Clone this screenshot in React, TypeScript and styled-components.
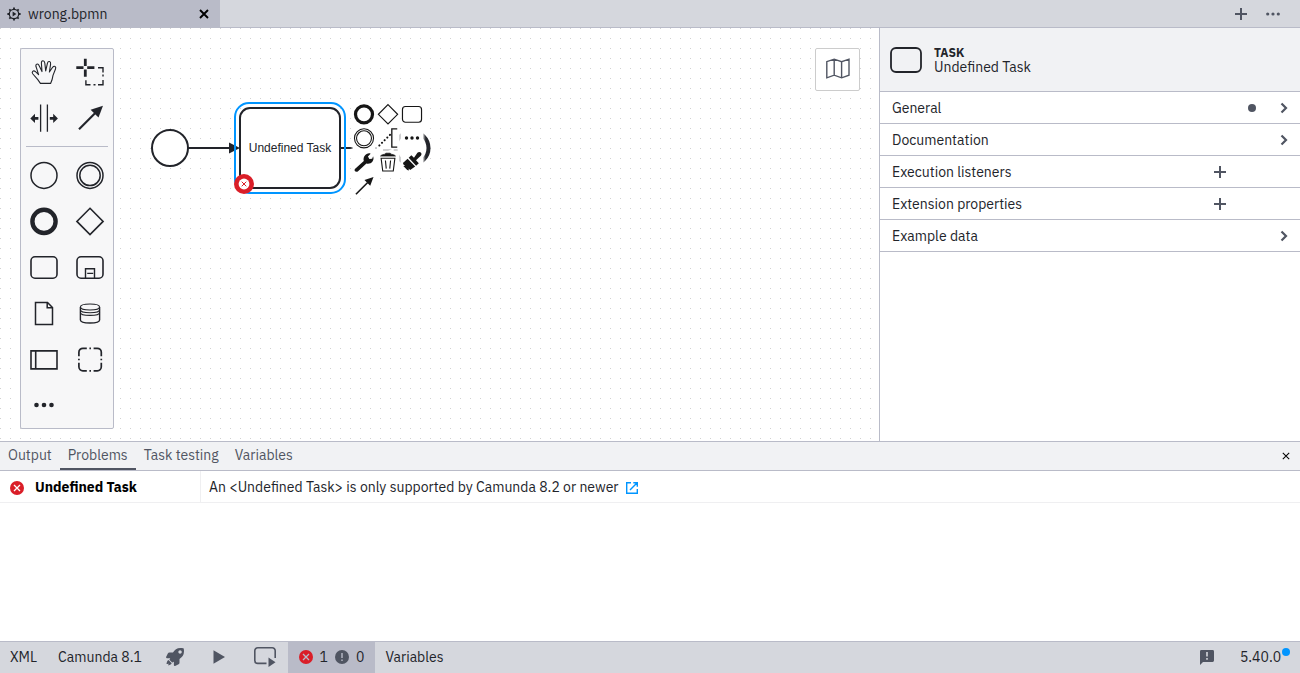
import React from "react";
import styled, { createGlobalStyle, css } from "styled-components";

const color = {
  text: "#22242a",
  icon: "#505562",
  line: "#b9bbc8",
  bar: "#d5d7dd",
  active: "#b9bbc8",
  header: "#f1f2f4",
  palette: "#f7f7f8",
  blue: "#0095ff",
  red: "#da1e28",
};

const GlobalStyle = createGlobalStyle`
  *, *::before, *::after { box-sizing: border-box; }
  body {
    margin: 0;
    font-family: "IBM Plex Sans", Roboto, "Liberation Sans", sans-serif;
    font-size: 14px;
    line-height: 18px;
    color: ${color.text};
    background: #fff;
  }
  button {
    font: inherit;
    color: inherit;
    background: none;
    border: 0;
    padding: 0;
    cursor: pointer;
  }
  svg { display: block; flex: none; }
`;

const Page = styled.div`
  display: flex;
  flex-direction: column;
  min-height: 100vh;
`;

/* ---------- tab bar ---------- */

const TabBar = styled.header`
  display: flex;
  height: 28px;
  background: ${color.bar};
  border-bottom: 1px solid ${color.line};
`;

const FileTab = styled.div`
  display: flex;
  align-items: center;
  gap: 7px;
  width: 220px;
  padding: 0 9px 0 7px;
  background: ${color.active};
`;

const FileName = styled.span`
  flex: 1;
`;

const TabActions = styled.div`
  display: flex;
  margin-left: auto;
  padding-right: 11px;
`;

const IconButton = styled.button<{ $width?: number }>`
  display: flex;
  align-items: center;
  justify-content: center;
  width: ${(p) => p.$width ?? 32}px;
  color: ${color.icon};
`;

/* ---------- editor ---------- */

const Editor = styled.main`
  display: flex;
  flex: 1;
`;

const Canvas = styled.section`
  position: relative;
  flex: 1;
  padding: 20px;
  padding-bottom: 12px;
  display: flex;
  align-items: flex-start;
  justify-content: space-between;
`;

const Diagram = styled.svg`
  position: absolute;
  inset: 0;
  width: 100%;
  height: 100%;
  font-family: "Liberation Sans", Arial, sans-serif;
  font-size: 12px;
`;

const Palette = styled.nav`
  position: relative;
  display: grid;
  grid-template-columns: 46px 46px;
  grid-auto-rows: auto;
  background: ${color.palette};
  border: 1px solid ${color.line};
  border-radius: 2px;
`;

const PaletteEntry = styled.button`
  display: flex;
  align-items: center;
  justify-content: center;
  height: 46px;
  color: ${color.text};
`;

const Separator = styled.hr`
  grid-column: 1 / -1;
  width: 82px;
  margin: 5px;
  border: 0;
  border-top: 1px solid ${color.line};
`;

const MapToggle = styled.button`
  position: relative;
  display: flex;
  align-items: center;
  justify-content: center;
  width: 45px;
  height: 43px;
  margin-right: -1px;
  padding-bottom: 2px;
  color: ${color.icon};
  background: #fff;
  border: 1px solid #ccc;
  border-radius: 2px;
`;

const ContextPad = styled.div`
  position: absolute;
  left: 353px;
  top: 75px;
  display: grid;
  grid-template-columns: repeat(3, 22px);
  gap: 2px;
`;

const PadEntry = styled.button`
  width: 22px;
  height: 22px;
  color: #161616;
  background: #fff;
  box-shadow: 0 0 2px 1px #fff;
`;

const ErrorBadge = styled.button`
  position: absolute;
  left: 234px;
  top: 146px;
`;

/* ---------- properties ---------- */

const Properties = styled.aside`
  width: 421px;
  border-left: 1px solid ${color.line};
  background: #fff;
`;

const PropertiesHeader = styled.div`
  display: flex;
  align-items: center;
  gap: 12px;
  height: 64px;
  padding: 0 10px;
  background: ${color.header};
  border-bottom: 1px solid ${color.line};
`;

const ElementType = styled.div`
  font-size: 12px;
  line-height: 15px;
  font-weight: 700;
`;

const ElementName = styled.div`
  line-height: 15px;
`;

const Group = styled.div`
  display: flex;
  height: 32px;
  border-bottom: 1px solid ${color.line};
`;

const GroupTitle = styled.button`
  flex: 1;
  padding-left: 12px;
  text-align: left;
`;

const Slot = styled.span`
  display: flex;
  align-items: center;
  justify-content: center;
  width: 32px;
  color: ${color.icon};
`;

const Dot = styled.span`
  width: 8px;
  height: 8px;
  border-radius: 50%;
  background: ${color.icon};
`;

/* ---------- bottom panel ---------- */

const Panel = styled.section`
  height: 200px;
  border-top: 1px solid ${color.line};
`;

const PanelTabs = styled.div`
  display: flex;
  height: 29px;
  padding-right: 6px;
  background: ${color.header};
  border-bottom: 1px solid ${color.line};
`;

const PanelTab = styled.button<{ $active?: boolean }>`
  padding: 0 8px;
  color: ${color.icon};
  border-bottom: 2px solid ${(p) => (p.$active ? color.icon : "transparent")};
`;

const PanelClose = styled.button`
  display: flex;
  align-items: center;
  justify-content: center;
  width: 16px;
  margin-left: auto;
`;

const Problem = styled.div`
  display: grid;
  grid-template-columns: 201px 1fr;
  height: 32px;
  border-bottom: 1px solid #efeff1;
`;

const ProblemName = styled.div`
  display: flex;
  align-items: center;
  gap: 11px;
  padding-left: 10px;
  font-weight: 700;
  color: #000;
  border-right: 1px solid #efeff1;
`;

const ProblemText = styled.div`
  display: flex;
  align-items: center;
  gap: 8px;
  padding-left: 8px;
`;

const HelpLink = styled.a`
  padding-top: 2px;
  color: ${color.blue};
`;

const ProblemIcon = styled.span`
  padding-top: 2px;
`;

/* ---------- status bar ---------- */

const StatusBar = styled.footer`
  display: flex;
  height: 32px;
  background: ${color.bar};
  border-top: 1px solid ${color.line};
`;

const StatusButton = styled.button<{ $width: number; $active?: boolean; $muted?: boolean }>`
  display: flex;
  align-items: center;
  justify-content: center;
  gap: 7px;
  min-width: ${(p) => p.$width}px;
  padding-bottom: 2px;
  ${(p) => p.$active && css`background: ${color.active};`}
  ${(p) => p.$muted && css`color: ${color.icon};`}
`;

const StatusEnd = styled.div`
  display: flex;
  margin-left: auto;
  padding-right: 9px;
`;

const Version = styled(StatusButton)`
  position: relative;
`;

const UpdateDot = styled.span`
  position: absolute;
  right: 1px;
  top: 6px;
  width: 8px;
  height: 8px;
  border-radius: 50%;
  background: ${color.blue};
`;

/* ---------- glyphs, all drawn in a 30 x 30 box ---------- */

const glyphs: Record<string, React.ReactNode> = {
  hand: (
    <path
      d="M11.4 26.4 8.6 22.4 3.9 17C2.1 14.8 4.4 12.8 6.5 14.7L9.6 17.6 7.2 10.2C6 7 8.9 5.7 10.2 8.7L13 14.6 12.4 6.2C12.2 3 15.4 2.9 15.8 6L16.7 13.9 18.4 6.3C19.1 3.5 22 4.1 21.6 7.1L20.4 15 23.6 10.3C25.2 8.2 27.5 9.5 26.5 12L24 18.4C23.6 21.5 23 23.5 21.6 26.4Z"
      strokeWidth="1.1"
      strokeLinejoin="round"
    />
  ),
  lasso: (
    <>
      <path d="M1.3 10.7h7.2M12.2 10.7h7.2M10.3 1.7v7.2M10.3 12.6v7.2" strokeWidth="2.8" />
      <path d="M23 10.8h5v4.600M28 17.500v2M28 23v4.800H23M20.500 27.800h-2M15.500 27.800h-4.600v-4.500" strokeWidth="1.4" />
    </>
  ),
  space: (
    <>
      <path d="M11.6 1.6v27.2M18.4 1.6v27.2" strokeWidth="1.3" />
      <path d="M1.3 15.4 6 10.8v3.2h3.4v2.8H6V20ZM28.9 15.4l-4.7-4.6v3.2h-3.4v2.8h3.4V20Z" fill="currentColor" stroke="none" />
    </>
  ),
  arrow: (
    <>
      <path d="M4 26.2 20 10.2" strokeWidth="2.2" />
      <path d="M28 2.8 23.5 14.6 15.6 6.8Z" fill="currentColor" stroke="none" />
    </>
  ),
  start: <circle cx="15" cy="15.4" r="13" strokeWidth="1.5" />,
  intermediate: (
    <>
      <circle cx="15" cy="15.4" r="13" strokeWidth="1.5" />
      <circle cx="15" cy="15.4" r="10.2" strokeWidth="1.5" />
    </>
  ),
  end: <circle cx="15" cy="15.4" r="11.6" strokeWidth="4.4" />,
  gateway: <path d="M15 2.3 28.1 15.4 15 28.5 1.9 15.4Z" strokeWidth="1.6" />,
  task: <rect x="2" y="4.8" width="26" height="21.4" rx="4" strokeWidth="1.6" />,
  subprocess: (
    <>
      <rect x="2" y="4.8" width="26" height="21.4" rx="4" strokeWidth="1.6" />
      <path d="M10.5 26v-9.2h9V26M12.2 21.4h6" strokeWidth="1.4" />
    </>
  ),
  dataObject: (
    <path d="M6.5 4.4h12l5 5.2v17h-17ZM18.2 4.6v5.2h5.2" strokeWidth="1.5" />
  ),
  dataStore: (
    <>
      <path d="M5.4 9v13c0 4 19.2 4 19.2 0V9" strokeWidth="1.4" />
      <path d="M5.4 9c0-4 19.2-4 19.2 0s-19.2 4-19.2 0M5.4 11.7c0 4 19.2 4 19.2 0M5.4 14.4c0 4 19.2 4 19.2 0" strokeWidth="1.1" />
    </>
  ),
  pool: <path d="M2 6.9h26v18H2ZM6.7 6.9v18" strokeWidth="1.6" />,
  group: (
    <path
      d="M3.9 12.2V8.3a4 4 0 0 1 4-4h3.9M18.6 4.3h3.7a4 4 0 0 1 4 4v3.9M26.3 18.8v4a4 4 0 0 1-4 4h-3.7M11.8 26.8H7.9a4 4 0 0 1-4-4v-4M14.4 4.3H16M14.4 26.8H16M3.9 14.7v1.6M26.3 14.7v1.6"
      strokeWidth="1.7"
    />
  ),
  more: (
    <g fill="currentColor" stroke="none">
      <circle cx="7.5" cy="15" r="2.3" />
      <circle cx="15" cy="15" r="2.3" />
      <circle cx="22.5" cy="15" r="2.3" />
    </g>
  ),
  annotation: (
    <>
      <path d="M27.6 2.6h-7.4v24.8h7.4" strokeWidth="1.8" />
      <path d="M3.2 25.2 18 10.4" strokeWidth="2.8" strokeLinecap="round" strokeDasharray="0.1 5" />
    </>
  ),
  wrench: (
    <path
      d="M2.6 24.5 14.7 13.6C13.3 8 17.6 2.5 23 3.2L24 3.6 20.4 7.6 22.3 11 26.2 10.7 27.4 7C29.8 13 24.4 18.6 18.3 17L6.5 28C3.6 29.4 1 26.8 2.6 24.5Z"
      fill="currentColor"
      stroke="none"
    />
  ),
  trash: (
    <>
      <path d="M4.8 6.9C6.5 4.8 9.5 4.6 11 4.3l1-1.3h6l1 1.3c1.5.3 4.5.5 6.2 2.6Z" fill="currentColor" />
      <path d="M5.6 9.8h18.8l-2.2 17.4H7.8ZM11.5 13l1.1 11M18.5 13l-1.1 11" strokeWidth="1.5" />
    </>
  ),
  brush: (
    <path
      d="M27 2.2c1.3 1.4 1.1 3.2 0 4.4l-6.5 6 3.8 4-3.7 3.5L10.5 9.3l3.6-3.6 3.6 3.5 4.7-6.8c1.4-1.2 3.3-1.4 4.6-.2ZM9 10.6 19.3 21 12.5 26 10.4 23.8 10.8 26.5 8.5 26 3.2 20.6 5.7 20 3.6 18.6 2.6 16.5Z"
      fill="currentColor"
      stroke="none"
    />
  ),
};

function Glyph({ name, size = 30 }: { name: string; size?: number }) {
  return (
    <svg width={size} height={size} viewBox="0 0 30 30" fill="none" stroke="currentColor" aria-hidden="true">
      {glyphs[name]}
    </svg>
  );
}

function Cross({ size, weight }: { size: number; weight: number }) {
  return (
    <svg width={size} height={size} viewBox="0 0 10 10" fill="none" stroke="#000" strokeWidth={weight} aria-hidden="true">
      <path d="m1 1 8 8M9 1 1 9" />
    </svg>
  );
}

function Plus() {
  return (
    <svg width="12" height="12" viewBox="0 0 12 12" fill="none" stroke="currentColor" strokeWidth="2" aria-hidden="true">
      <path d="M6 0v12M0 6h12" />
    </svg>
  );
}

function Chevron() {
  return (
    <svg width="8" height="12" viewBox="0 0 8 12" fill="none" stroke="currentColor" strokeWidth="2.2" aria-hidden="true">
      <path d="M1.5 1.5 6 6l-4.5 4.5" />
    </svg>
  );
}

function ErrorIcon({ cross = "#fff" }: { cross?: string }) {
  return (
    <svg width="14" height="14" viewBox="0 0 14 14" aria-hidden="true">
      <circle cx="7" cy="7" r="7" fill={color.red} />
      <path d="m4 4 6 6m0-6-6 6" stroke={cross} strokeWidth="1.3" />
    </svg>
  );
}

function WarningIcon() {
  return (
    <svg width="14" height="14" viewBox="0 0 14 14" aria-hidden="true">
      <circle cx="7" cy="7" r="7" fill={color.icon} />
      <path d="M7 3v5M7 9.5V11" stroke={color.active} strokeWidth="1.4" />
    </svg>
  );
}

const palette = [
  ["hand", "Activate hand tool"],
  ["lasso", "Activate lasso tool"],
  ["space", "Activate create/remove space tool"],
  ["arrow", "Activate global connect tool"],
  ["", ""],
  ["start", "Create start event"],
  ["intermediate", "Create intermediate event"],
  ["end", "Create end event"],
  ["gateway", "Create gateway"],
  ["task", "Create task"],
  ["subprocess", "Create sub-process"],
  ["dataObject", "Create data object"],
  ["dataStore", "Create data store"],
  ["pool", "Create pool"],
  ["group", "Create group"],
  ["more", "Create element"],
];

const pad = [
  ["end", "Append end event"],
  ["gateway", "Append gateway"],
  ["task", "Append task"],
  ["intermediate", "Append intermediate event"],
  ["annotation", "Add text annotation"],
  ["more", "Append element"],
  ["wrench", "Change element"],
  ["trash", "Delete"],
  ["brush", "Set color"],
  ["arrow", "Connect to other element"],
];

const groups = [
  { title: "General", edited: true },
  { title: "Documentation" },
  { title: "Execution listeners", list: true },
  { title: "Extension properties", list: true },
  { title: "Example data" },
];

const panelTabs = ["Output", "Problems", "Task testing", "Variables"];

export default function App() {
  return (
    <Page>
      <GlobalStyle />
      <TabBar>
        <FileTab>
          <svg width="14" height="14" viewBox="0 0 14 14" fill="none" stroke={color.text} aria-hidden="true">
            <circle cx="7" cy="7" r="4.7" strokeWidth="1.3" />
            <path
              d="M7 0.4v2M7 11.6v2M0.4 7h2M11.6 7h2M2.3 2.3l1.4 1.4M10.3 10.3l1.4 1.4M2.3 11.7l1.4-1.4M10.3 3.7l1.4-1.4"
              strokeWidth="1.8"
            />
            <path d="M5.6 4.6 9.4 7 5.6 9.4Z" fill={color.text} stroke="none" />
          </svg>
          <FileName>wrong.bpmn</FileName>
          <IconButton $width={14} aria-label="Close tab">
            <Cross size={10} weight={1.9} />
          </IconButton>
        </FileTab>
        <TabActions>
          <IconButton aria-label="New file">
            <Plus />
          </IconButton>
          <IconButton aria-label="More tabs">
            <svg width="14" height="4" viewBox="0 0 14 4" fill="currentColor" aria-hidden="true">
              <circle cx="1.7" cy="2" r="1.6" />
              <circle cx="7" cy="2" r="1.6" />
              <circle cx="12.3" cy="2" r="1.6" />
            </svg>
          </IconButton>
        </TabActions>
      </TabBar>

      <Editor>
        <Canvas aria-label="Diagram">
          <Diagram>
            <defs>
              <pattern id="grid" width="10" height="10" patternUnits="userSpaceOnUse">
                <rect width="1" height="1" fill="#d2d2d2" />
              </pattern>
            </defs>
            <rect width="100%" height="100%" fill="url(#grid)" />
            <g fill="#fff" stroke={color.text} strokeWidth="2">
              <circle cx="170" cy="120" r="18" />
              <path d="M188 120h44M340 120h46" />
              <path d="M229 114.5 240 120l-11 5.5ZM383 114.5l11 5.5-11 5.5Z" fill={color.text} stroke="none" />
              <circle cx="412" cy="120" r="16.5" strokeWidth="4" />
              <rect x="240" y="80" width="100" height="80" rx="10" />
              <rect x="235" y="75" width="110" height="90" rx="14" fill="none" stroke={color.blue} />
            </g>
            <text x="290" y="124" textAnchor="middle" fill={color.text}>
              Undefined Task
            </text>
          </Diagram>

          <Palette aria-label="Palette">
            {palette.map(([name, title]) =>
              name ? (
                <PaletteEntry key={name} aria-label={title}>
                  <Glyph name={name} />
                </PaletteEntry>
              ) : (
                <Separator key="separator" />
              )
            )}
          </Palette>

          <MapToggle aria-label="Toggle minimap">
            <svg width="24" height="21" viewBox="0 0 24 21" fill="none" stroke="currentColor" strokeWidth="1.4" aria-hidden="true">
              <path d="M.8 3.7 8.2 1.2l7.4 2.5L23 1.2v16l-7.4 2.6-7.4-2.6-7.4 2.6ZM8.2 1.2v16M15.6 3.7v16" />
            </svg>
          </MapToggle>

          <ContextPad>
            {pad.map(([name, title]) => (
              <PadEntry key={name} aria-label={title}>
                <Glyph name={name} size={22} />
              </PadEntry>
            ))}
          </ContextPad>

          <ErrorBadge aria-label="Show problem">
            <svg width="20" height="20" viewBox="0 0 20 20" aria-hidden="true">
              <circle cx="10" cy="10" r="10" fill={color.red} />
              <circle cx="10" cy="10" r="5.4" fill="#fff" />
              <path d="m7.7 7.7 4.6 4.6m0-4.6-4.6 4.6" stroke={color.red} strokeWidth="1" />
            </svg>
          </ErrorBadge>
        </Canvas>

        <Properties aria-label="Properties">
          <PropertiesHeader>
            <svg width="32" height="26" viewBox="0 0 32 26" fill="none" stroke={color.text} strokeWidth="1.8" aria-hidden="true">
              <rect x="1" y="1" width="30" height="24" rx="5" />
            </svg>
            <div>
              <ElementType>TASK</ElementType>
              <ElementName>Undefined Task</ElementName>
            </div>
          </PropertiesHeader>
          {groups.map((group) => (
            <Group key={group.title}>
              <GroupTitle>{group.title}</GroupTitle>
              {group.list && (
                <IconButton aria-label={`Create ${group.title}`}>
                  <Plus />
                </IconButton>
              )}
              <Slot>{group.edited && <Dot />}</Slot>
              <Slot>{!group.list && <Chevron />}</Slot>
            </Group>
          ))}
        </Properties>
      </Editor>

      <Panel>
        <PanelTabs>
          {panelTabs.map((tab) => (
            <PanelTab key={tab} $active={tab === "Problems"}>
              {tab}
            </PanelTab>
          ))}
          <PanelClose aria-label="Close panel">
            <Cross size={8} weight={1.3} />
          </PanelClose>
        </PanelTabs>
        <Problem>
          <ProblemName>
            <ProblemIcon>
              <ErrorIcon />
            </ProblemIcon>
            Undefined Task
          </ProblemName>
          <ProblemText>
            An &lt;Undefined Task&gt; is only supported by Camunda 8.2 or newer
            <HelpLink href="#" aria-label="Open documentation">
              <svg width="12" height="12" viewBox="0 0 12 12" fill="none" stroke="currentColor" strokeWidth="1.4" aria-hidden="true">
                <path d="M5 .7H.7v10.6h10.6V7M7.3.7h4v4M11.2.8 4 8" />
              </svg>
            </HelpLink>
          </ProblemText>
        </Problem>
      </Panel>

      <StatusBar>
        <StatusButton $width={47}>XML</StatusButton>
        <StatusButton $width={106}>Camunda 8.1</StatusButton>
        <StatusButton $width={44} $muted aria-label="Deploy">
          <svg width="18" height="18" viewBox="0 0 512 512" fill="currentColor" aria-hidden="true">
            <path d="M505.1 19.1C503.8 13 499 8.2 492.9 6.9 460.7 0 435.5 0 410.4 0 307.2 0 245.3 55.2 199.1 128H94.9c-18.2 0-34.8 10.3-42.9 26.5L2.6 253.3c-8 16 3.6 34.7 21.5 34.7h95.1c-5.9 12.8-11.9 25.5-18 37.7-3.1 6.2-1.9 13.6 3 18.5l63.6 63.6c4.9 4.9 12.3 6.1 18.5 3 12.2-6.1 24.9-12 37.7-17.9V488c0 17.8 18.8 29.4 34.7 21.5l98.7-49.4c16.3-8.1 26.5-24.8 26.5-42.9V312.8c72.6-46.4 128-108.4 128-211.1.1-25.2.1-50.4-6.8-82.6ZM400 160c-26.5 0-48-21.5-48-48s21.5-48 48-48 48 21.5 48 48-21.5 48-48 48Z" />
            <path d="M72 340c-34 14-52 60-58 118 28-4 44-10 58-20 0 22-4 40-10 60 60-12 92-34 98-64Z" />
          </svg>
        </StatusButton>
        <StatusButton $width={44} $muted aria-label="Start instance">
          <svg width="12" height="14" viewBox="0 0 12 14" fill="currentColor" aria-hidden="true">
            <path d="M.5.3 12 7 .5 13.7Z" />
          </svg>
        </StatusButton>
        <StatusButton $width={47} $muted aria-label="Test task">
          <svg width="22" height="20" viewBox="0 0 22 20" fill="none" stroke="currentColor" strokeWidth="1.6" aria-hidden="true">
            <path d="M12.5 16.4H3.8a3 3 0 0 1-3-3V3.8a3 3 0 0 1 3-3h14.4a3 3 0 0 1 3 3V11" />
            <path d="M14.5 10.5 21.5 15.2 14.5 20Z" fill="currentColor" stroke="none" />
          </svg>
        </StatusButton>
        <StatusButton $width={87} $active aria-label="Problems: 1 error, 0 warnings">
          <ErrorIcon cross={color.active} />
          <span>1</span>
          <WarningIcon />
          <span>0</span>
        </StatusButton>
        <StatusButton $width={79}>Variables</StatusButton>
        <StatusEnd>
          <StatusButton $width={46} $muted aria-label="Give feedback">
            <svg width="14" height="16" viewBox="0 0 14 16" fill="currentColor" aria-hidden="true">
              <path d="M1.4 1h11.2A1.4 1.4 0 0 1 14 2.4v9.1a1.4 1.4 0 0 1-1.4 1.4H3L0 16V2.4A1.4 1.4 0 0 1 1.4 1Z" />
              <path d="M7 3v4.5M7 9v1.7" stroke={color.bar} strokeWidth="1.6" />
            </svg>
          </StatusButton>
          <Version $width={61}>
            5.40.0
            <UpdateDot />
          </Version>
        </StatusEnd>
      </StatusBar>
    </Page>
  );
}
